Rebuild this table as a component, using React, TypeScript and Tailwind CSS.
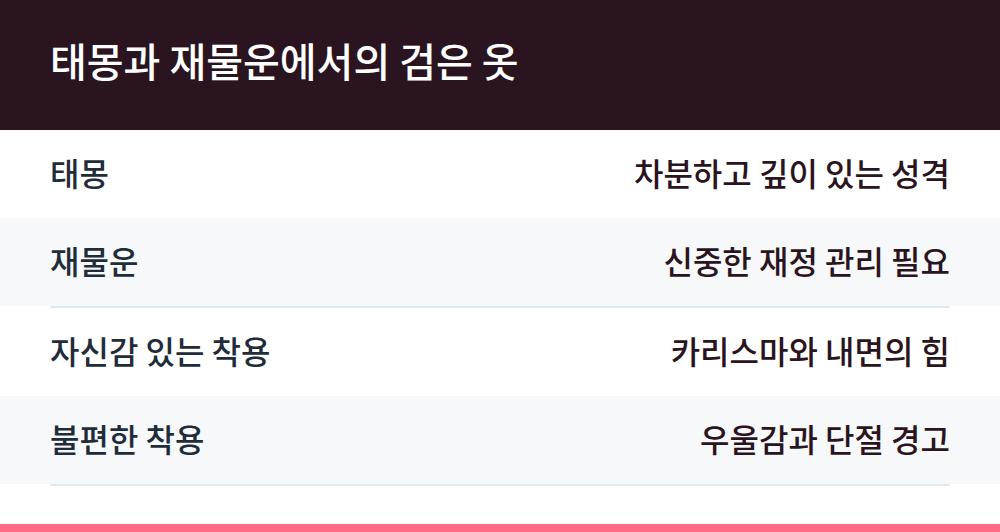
import React from "react";

const rows = [
  { k: "태몽", v: "차분하고 깊이 있는 성격", alt: false, border: false },
  { k: "재물운", v: "신중한 재정 관리 필요", alt: true, border: true },
  { k: "자신감 있는 착용", v: "카리스마와 내면의 힘", alt: false, border: false },
  { k: "불편한 착용", v: "우울감과 단절 경고", alt: true, border: true },
];

export default function App() {
  return (
    <div
      className="w-[1000px] h-[532px] bg-white flex flex-col overflow-hidden"
      style={{ fontFamily: '"Noto Sans CJK KR", "Noto Sans", sans-serif' }}
    >
      <div className="h-[130px] bg-[#2a1420] flex items-center px-[50px] pb-[10px] shrink-0">
        <h1 className="text-white text-[40px] font-medium leading-none">
          태몽과 재물운에서의 검은 옷
        </h1>
      </div>
      <div className="flex flex-col">
        {rows.map((r, i) => (
          <div key={i} className="flex flex-col">
            <div
              className={`h-[88px] flex items-center justify-between px-[50px] pb-[4px] ${
                r.alt ? "bg-[#f7f8fa]" : "bg-white"
              }`}
            >
              <span className="text-[32px] font-medium text-[#1f2d3a] leading-none">
                {r.k}
              </span>
              <span className="text-[32px] font-medium text-[#2a1420] leading-none">
                {r.v}
              </span>
            </div>
            {r.border && (
              <div className="px-[50px]">
                <div className="h-[2px] bg-[#e2e8f0]" />
              </div>
            )}
          </div>
        ))}
      </div>
      <div className="flex-1" />
      <div className="h-[8px] bg-[#ff6b85] shrink-0" />
    </div>
  );
}
